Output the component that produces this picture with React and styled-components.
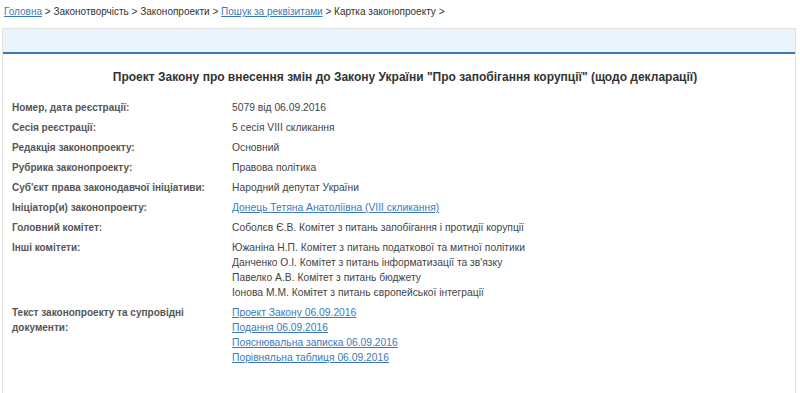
import React from "react";
import styled, { createGlobalStyle } from "styled-components";

const Global = createGlobalStyle`
  html, body { margin: 0; padding: 0; background: #fff; }
  body { font-family: Arial, "Liberation Sans", sans-serif; color: #333; }
`;

const Crumbs = styled.div`
  font-size: 10px;
  line-height: 14px;
  padding: 5px 0 0 4px;
  height: 24px;
  box-sizing: border-box;
  color: #333;
`;

const Link = styled.a`
  color: #3b79bd;
  text-decoration: underline;
  cursor: pointer;
`;

const Card = styled.div`
  margin-left: 2px;
  width: 794px;
  margin-top: 4px;
  border: 1px solid #e2e2e2;
  border-bottom: none;
  min-height: 380px;
  box-sizing: border-box;
`;

const CardHead = styled.div`
  height: 23px;
  background: #e9f4fd;
  border-bottom: 2px solid #3a78b6;
`;

const Title = styled.h1`
  margin: 0;
  font-size: 12px;
  font-weight: bold;
  color: #333;
  text-align: center;
  padding: 16px 0 0 12px;
  line-height: 15px;
  margin-bottom: 15px;
`;

const Rows = styled.div`
  padding-left: 9px;
`;

const Row = styled.div`
  display: grid;
  grid-template-columns: 220px 1fr;
  line-height: 15px;
  margin-bottom: 5px;
`;

const Label = styled.div`
  font-size: 10px;
  font-weight: bold;
  color: #555;
`;

const LabelText = styled.span`
  display: block;
  max-width: 205px;
`;

const Value = styled.div`
  font-size: 10.3px;
  color: #444;
  display: flex;
  flex-direction: column;
`;

const data = [
  ["Номер, дата реєстрації:", ["5079 від 06.09.2016"]],
  ["Сесія реєстрації:", ["5 сесія VIII скликання"]],
  ["Редакція законопроекту:", ["Основний"]],
  ["Рубрика законопроекту:", ["Правова політика"]],
  ["Суб'єкт права законодавчої ініціативи:", ["Народний депутат України"]],
  ["Ініціатор(и) законопроекту:", [{ link: "Донець Тетяна Анатоліївна (VIII скликання)" }]],
  ["Головний комітет:", ["Соболєв Є.В. Комітет з питань запобігання і протидії корупції"]],
  [
    "Інші комітети:",
    [
      "Южаніна Н.П. Комітет з питань податкової та митної політики",
      "Данченко О.І. Комітет з питань інформатизації та зв'язку",
      "Павелко А.В. Комітет з питань бюджету",
      "Іонова М.М. Комітет з питань європейської інтеграції",
    ],
  ],
  [
    "Текст законопроекту та супровідні документи:",
    [
      { link: "Проект Закону 06.09.2016" },
      { link: "Подання 06.09.2016" },
      { link: "Пояснювальна записка 06.09.2016" },
      { link: "Порівняльна таблиця 06.09.2016" },
    ],
  ],
];

export default function App() {
  return (
    <>
      <Global />
      <Crumbs>
        <Link>Головна</Link> &gt; Законотворчість &gt; Законопроекти &gt;{" "}
        <Link>Пошук за реквізитами</Link> &gt; Картка законопроекту &gt;
      </Crumbs>
      <Card>
        <CardHead />
        <Title>
          Проект Закону про внесення змін до Закону України "Про запобігання корупції" (щодо декларації)
        </Title>
        <Rows>
          {data.map(([label, values]) => (
            <Row key={label}>
              <Label>
                <LabelText>{label}</LabelText>
              </Label>
              <Value>
                {values.map((v, i) =>
                  typeof v === "string" ? (
                    <span key={i}>{v}</span>
                  ) : (
                    <span key={i}>
                      <Link>{v.link}</Link>
                    </span>
                  )
                )}
              </Value>
            </Row>
          ))}
        </Rows>
      </Card>
    </>
  );
}
